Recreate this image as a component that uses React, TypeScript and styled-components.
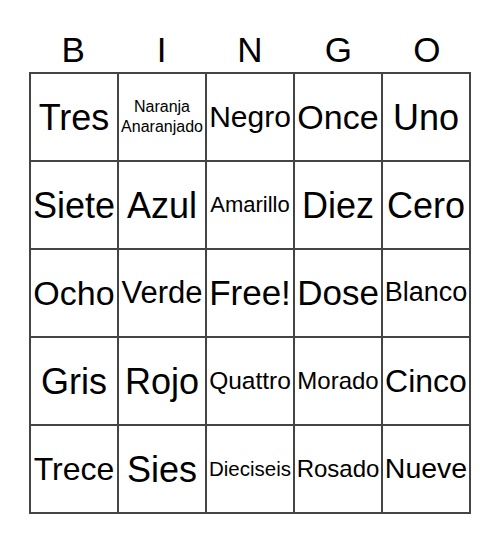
import styled, { createGlobalStyle } from "styled-components";

const GlobalStyle = createGlobalStyle`
  html, body {
    margin: 0;
    padding: 0;
    background: #fff;
  }
  body {
    font-family: "Liberation Sans", Arial, sans-serif;
    color: #000;
  }
`;

type Square = {
  text: string[];
  size: number;
};

const letters = ["B", "I", "N", "G", "O"];

const squares: Square[] = [
  { text: ["Tres"], size: 36 },
  { text: ["Naranja", "Anaranjado"], size: 16 },
  { text: ["Negro"], size: 30 },
  { text: ["Once"], size: 34 },
  { text: ["Uno"], size: 36 },

  { text: ["Siete"], size: 36 },
  { text: ["Azul"], size: 36 },
  { text: ["Amarillo"], size: 22 },
  { text: ["Diez"], size: 36 },
  { text: ["Cero"], size: 36 },

  { text: ["Ocho"], size: 34 },
  { text: ["Verde"], size: 31 },
  { text: ["Free!"], size: 35 },
  { text: ["Dose"], size: 35 },
  { text: ["Blanco"], size: 27 },

  { text: ["Gris"], size: 36 },
  { text: ["Rojo"], size: 36 },
  { text: ["Quattro"], size: 24.5 },
  { text: ["Morado"], size: 24 },
  { text: ["Cinco"], size: 32 },

  { text: ["Trece"], size: 32 },
  { text: ["Sies"], size: 36 },
  { text: ["Dieciseis"], size: 20.5 },
  { text: ["Rosado"], size: 24 },
  { text: ["Nueve"], size: 28.5 },
];

function App() {
  return (
    <Page>
      <GlobalStyle />
      <Header>
        {letters.map((l) => (
          <Letter key={l}>{l}</Letter>
        ))}
      </Header>
      <Board>
        {squares.map((sq, i) => (
          <Cell key={i} $size={sq.size}>
            <span>
              {sq.text.map((line, j) => (
                <Line key={j}>{line}</Line>
              ))}
            </span>
          </Cell>
        ))}
      </Board>
    </Page>
  );
}

const Page = styled.div`
  width: 500px;
  height: 544px;
  display: flex;
  flex-direction: column;
  align-items: center;
`;

const Header = styled.div`
  width: 442px;
  height: 72px;
  display: grid;
  grid-template-columns: repeat(5, 1fr);
  align-items: end;
`;

const Letter = styled.div`
  text-align: center;
  font-size: 35px;
  line-height: 1;
  padding-bottom: 5px;
`;

const Board = styled.div`
  width: 442px;
  height: 442px;
  box-sizing: border-box;
  display: grid;
  grid-template-columns: repeat(5, 1fr);
  grid-template-rows: repeat(5, 1fr);
  gap: 2px;
  padding: 2px;
  background: #444;
`;

const Cell = styled.div<{ $size: number }>`
  background: #fff;
  display: flex;
  align-items: center;
  justify-content: center;
  text-align: center;
  font-size: ${(p) => p.$size}px;
  line-height: 1.25;
  white-space: nowrap;
  overflow: hidden;
`;

const Line = styled.div`
  display: block;
`;

export default App;
